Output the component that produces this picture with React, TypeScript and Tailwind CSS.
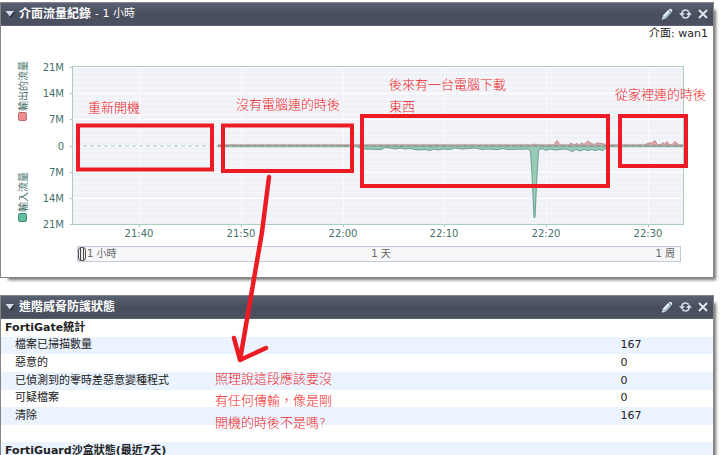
import type { ReactNode } from 'react'

const yTicks = [
  { y: 67, label: '21M' },
  { y: 93, label: '14M' },
  { y: 119, label: '7M' },
  { y: 146, label: '0' },
  { y: 172, label: '7M' },
  { y: 198, label: '14M' },
  { y: 224, label: '21M' },
]

const xTicks = [
  { x: 139, label: '21:40' },
  { x: 241, label: '21:50' },
  { x: 343, label: '22:00' },
  { x: 444, label: '22:10' },
  { x: 546, label: '22:20' },
  { x: 648, label: '22:30' },
]

const minorLines = Array.from({ length: 30 }, (_, i) => 67 + i * 5.25)

const inbound =
  'M218 146 L356 146 L362 149 L381 149.5 L385 147.5 L390 148 L395 149 L400 148 L405 149 L410 148.5 L418 150 L425 149.5 L430 150.5 L434 149 L438 150 L443 149 L450 149.5 L455 148 L462 149 L470 148.5 L475 148 L482 149.5 L490 149 L497 149.8 L503 148.5 L508 149.5 L528 149 L530.5 151 L532 175 L534 217.5 L535 217.5 L537 175 L538.5 151 L540 149 L543 149 L546 150.5 L550 149 L555 150 L560 149.5 L565 149 L569 150 L572 151.5 L576 149.5 L580 151 L584 149.5 L588 150.5 L592 149.5 L595 150.5 L599 149.5 L603 150.5 L606 148 L607 146 Z'

const outbound =
  'M218 145 L532 145 L534 144 L537 145 L554 145 L557 140.5 L560 145 L569 145 L571 143 L574 145 L577 143.5 L579 145 L582 143 L584 144.5 L588 141 L591 143.5 L594 144.5 L598 143 L604 144 L606 145 L644 145 L649 143 L652 143 L655 140.5 L657 144.5 L661 145 L663 142.5 L665 144.5 L667 141.5 L669 144.5 L672 144.5 L675 141.5 L679 145 L683 145 L683 146 L218 146 Z'

const stats = [
  { name: '檔案已掃描數量', value: 167 },
  { name: '惡意的', value: 0 },
  { name: '已偵測到的零時差惡意變種程式', value: 0 },
  { name: '可疑檔案', value: 0 },
  { name: '清除', value: 167 },
]

function PencilIcon() {
  return (
    <svg className="w-3 h-3" viewBox="0 0 12 12">
      <path d="M1 11.5 L1.8 7.5 L7 2 L10.2 4.8 L5 10.4 Z" fill="#b5cbe0" />
      <path d="M7.6 1.6 Q9 0 10.6 1.2 Q12 2.6 10.6 4.2 Z" fill="#e6eef6" />
      <path d="M3 8 L8 2.8" stroke="#fff" strokeWidth="1.4" />
      <path d="M4.8 9.8 L9.8 4.6" stroke="#8ba6c2" strokeWidth="1" />
      <path d="M0.8 11.6 L1.4 9.4 L3 10.9 Z" fill="#e9eef4" />
    </svg>
  )
}

function RefreshIcon() {
  return (
    <svg className="w-[13px] h-3" viewBox="0 0 13 12">
      <g fill="none" stroke="#d5e0eb" strokeWidth="1.7">
        <path d="M3 6 V5 Q3.4 2 6.5 2 Q8.6 2 9.6 3.4" />
        <path d="M10 6 V7 Q9.6 10 6.5 10 Q4.4 10 3.4 8.6" />
      </g>
      <path d="M0 5.2 H6 L3 8.6 Z" fill="#d5e0eb" />
      <path d="M7 6.8 H13 L10 3.4 Z" fill="#d5e0eb" />
    </svg>
  )
}

function CloseIcon() {
  return (
    <svg className="w-[10px] h-[10px]" viewBox="0 0 10 10">
      <path d="M1 1 L9 9 M9 1 L1 9" stroke="#e6ebf2" strokeWidth="1.8" />
    </svg>
  )
}

function Panel({ title, extra, children }: { title: string; extra?: ReactNode; children: ReactNode }) {
  return (
    <section className="border border-[#858585] bg-white shadow-[5px_5px_3px_-3px_rgba(0,0,0,0.55)]">
      <header className="flex items-center h-[23px] pl-1 pr-[5px] bg-linear-to-b from-[#596173] via-[#484e5c] to-[#4b5160] border-b border-[#5b6170] text-white">
        <button aria-label="收合" className="mr-1">
          <svg className="w-[10px] h-2" viewBox="0 0 10 8">
            <path d="M1 2 H10 L6 8 Z" fill="#272c36" />
            <path d="M0.5 1 H9 L4.8 6.5 Z" fill="#d3e0ea" />
          </svg>
        </button>
        <h2 className="flex-1 flex items-center gap-1 text-[12px] leading-4 font-bold whitespace-pre">
          {title}
          {extra}
        </h2>
        <div className="flex items-center gap-[6px]">
          <button aria-label="編輯">
            <PencilIcon />
          </button>
          <button aria-label="重新整理">
            <RefreshIcon />
          </button>
          <button aria-label="關閉">
            <CloseIcon />
          </button>
        </div>
      </header>
      {children}
    </section>
  )
}

function TrafficChart() {
  return (
    <svg className="block w-full" viewBox="1 42 712 204">
      <rect x="73" y="67" width="611" height="158" fill="#f0f2f8" />
      {minorLines.map((y) => (
        <path key={y} d={`M73 ${y} H683`} stroke="#f7f8fb" strokeWidth="1" />
      ))}
      {yTicks.map((t) => (
        <path key={t.y} d={`M73 ${t.y + 0.5} H683`} stroke="#fff" strokeWidth="1" />
      ))}
      {xTicks.map((t) => (
        <path key={t.x} d={`M${t.x + 0.5} 67 V224`} stroke="#f9fafc" strokeWidth="1" />
      ))}

      <rect x="72.5" y="66.5" width="611" height="158" fill="none" stroke="#a9cfc3" strokeWidth="1" />
      {yTicks.map((t) => (
        <path key={t.y} d={`M70 ${t.y + 0.5} H73`} stroke="#9cc7ba" strokeWidth="1" />
      ))}
      {xTicks.map((t) => (
        <path key={t.x} d={`M${t.x + 0.5} 225 V227`} stroke="#9cc7ba" strokeWidth="1" />
      ))}

      <path d={outbound} fill="#e9a3a5" stroke="#b98c8f" strokeWidth="1" />
      <path d={inbound} fill="#96ccb8" stroke="#6f9f8f" strokeWidth="1" />
      <path d="M218 145.5 H683" stroke="#b9a3a3" strokeWidth="2" />
      <path d="M76 146 H218" stroke="#c3dcd4" strokeWidth="1.5" strokeDasharray="4 3" />
      <path d="M218 146.5 H683" stroke="#8fb3a6" strokeWidth="1.5" />
      <path d="M218 146 H683" stroke="#7f958d" strokeWidth="1" strokeDasharray="4 3" />

      <g fill="#46716a" fontSize="10">
        {yTicks.map((t) => (
          <text key={t.y} x="64" y={t.y + 4} textAnchor="end">
            {t.label}
          </text>
        ))}
        {xTicks.map((t) => (
          <text key={t.x} x={t.x} y="237" textAnchor="middle">
            {t.label}
          </text>
        ))}
        <text transform="translate(27 111) rotate(-90)">輸出的流量</text>
        <text transform="translate(27 212) rotate(-90)">輸入流量</text>
      </g>
      <rect x="18.5" y="112.5" width="8" height="8" rx="1.5" fill="#f08f8f" stroke="#b56e6e" />
      <rect x="18.5" y="213.5" width="8" height="8" rx="1.5" fill="#5fbfa2" stroke="#3f8a74" />
    </svg>
  )
}

function RangeBar() {
  return (
    <div className="relative ml-[76px] mr-8 mb-[15px] h-4">
      <input
        type="range"
        min={0}
        max={2}
        defaultValue={0}
        aria-label="時間範圍"
        className="block w-full h-4 appearance-none bg-[#f7f7f8] border border-[#c0cdda] [&::-webkit-slider-thumb]:appearance-none [&::-webkit-slider-thumb]:w-2 [&::-webkit-slider-thumb]:h-[14px] [&::-webkit-slider-thumb]:rounded-[3px] [&::-webkit-slider-thumb]:border [&::-webkit-slider-thumb]:border-[#555] [&::-webkit-slider-thumb]:bg-[linear-gradient(90deg,#eee_1px,#444_1px,#444_2px,#eee_2px,#eee_4px,#444_4px,#444_5px,#eee_5px)]"
      />
      <div className="absolute inset-0 grid grid-cols-3 pl-[10px] pr-[6px] text-[10px] leading-4 text-[#666] pointer-events-none">
        <span>1 小時</span>
        <span className="text-center">1 天</span>
        <span className="text-right">1 周</span>
      </div>
    </div>
  )
}

function Annotations() {
  return (
    <div className="absolute inset-x-0 top-0 pointer-events-none text-[13px] leading-[22px] text-[#ed1c24] font-light whitespace-nowrap">
      <svg className="block w-full" viewBox="0 0 720 455" fill="none" stroke="#ed1c24">
        <g strokeWidth="4">
          <rect x="78" y="125.5" width="134" height="44" />
          <rect x="223" y="125.5" width="129" height="45.5" />
          <rect x="362" y="116" width="246" height="70" />
          <rect x="620" y="116" width="66" height="50" />
        </g>
        <path d="M269 177 L262 232 L240 360 M234 338 L240 360 L266 348" strokeWidth="4.5" strokeLinecap="round" strokeLinejoin="round" />
      </svg>
      <p className="absolute left-[88px] top-[97px]">重新開機</p>
      <p className="absolute left-[236px] top-[94px]">沒有電腦連的時後</p>
      <p className="absolute left-[389px] top-[74px]">
        後來有一台電腦下載
        <br />
        東西
      </p>
      <p className="absolute left-[615px] top-[84px]">從家裡連的時後</p>
      <p className="absolute left-[215px] top-[368px]">
        照理說這段應該要沒
        <br />
        有任何傳輸，像是剛
        <br />
        開機的時後不是嗎?
      </p>
    </div>
  )
}

export default function App() {
  return (
    <main
      lang="zh-Hant"
      className="relative h-screen overflow-hidden bg-white pt-[2px] pr-[6px] flex flex-col gap-[17px] font-['DejaVu_Sans','Noto_Sans_CJK_TC',sans-serif] text-[11px] text-[#222]"
    >
      <Panel title="介面流量紀錄" extra={<span className="text-[11px] font-normal">- 1 小時</span>}>
        <p className="h-4 pr-[5px] text-right leading-4">介面: wan1</p>
        <TrafficChart />
        <RangeBar />
      </Panel>

      <Panel title="進階威脅防護狀態">
        <table className="w-full h-[141px] border-collapse text-left leading-4">
          <tbody>
            <tr>
              <th colSpan={2} className="p-0 pl-1 font-bold">
                FortiGate統計
              </th>
            </tr>
            {stats.map((s) => (
              <tr key={s.name} className="even:bg-[#ebf3fe]">
                <th scope="row" className="p-0 pl-[14px] font-normal w-[87%]">
                  {s.name}
                </th>
                <td className="p-0">{s.value}</td>
              </tr>
            ))}
            <tr>
              <td colSpan={2} className="p-0">
                &nbsp;
              </td>
            </tr>
            <tr className="bg-[#ebf3fe]">
              <th colSpan={2} className="p-0 pl-1 font-bold">
                FortiGuard沙盒狀態(最近7天)
              </th>
            </tr>
          </tbody>
        </table>
      </Panel>

      <Annotations />
    </main>
  )
}
